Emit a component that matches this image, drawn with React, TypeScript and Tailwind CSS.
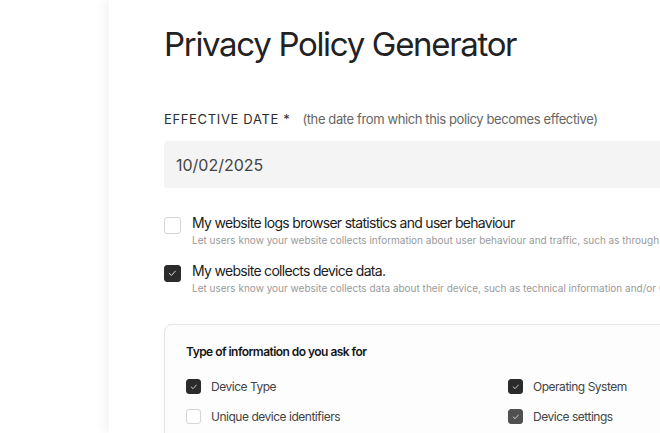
import { FC } from 'react';

const Check: FC<{ size: number }> = ({ size }) => (
  <svg width={size * 0.5} height={size * 0.5} viewBox="0 0 10 10" fill="none">
    <polyline points="1.5,5.2 4,7.6 8.6,2.6" stroke="#e8e8e8" strokeWidth="1.1" strokeLinecap="round" strokeLinejoin="round" />
  </svg>
);

interface BoxProps {
  checked: boolean;
  size: 'lg' | 'sm';
  tone?: 'dark' | 'mid';
}

const Box: FC<BoxProps> = ({ checked, size, tone = 'dark' }) => {
  const dim = size === 'lg' ? 'w-[17px] h-[17px] rounded-[3px]' : 'w-[15px] h-[15px] rounded-[3px]';
  const fill = checked
    ? tone === 'dark'
      ? 'bg-[#2b2b2b] border border-[#2b2b2b]'
      : 'bg-[#505050] border border-[#505050]'
    : 'bg-white border border-[#d4d4d4]';
  return (
    <span className={`shrink-0 flex items-center justify-center ${dim} ${fill}`}>
      {checked && <Check size={size === 'lg' ? 17 : 15} />}
    </span>
  );
};

const OptionRow: FC<{ checked: boolean; title: string; hint: string }> = ({ checked, title, hint }) => (
  <div className="flex items-start gap-[11px]">
    <div className="mt-[3px]">
      <Box checked={checked} size="lg" />
    </div>
    <div className="flex flex-col whitespace-nowrap">
      <span className="text-[14px] leading-[18px] text-[#1c1c1c] tracking-[-0.05em]">{title}</span>
      <span className="mt-[1px] text-[10px] leading-[14px] text-[#9a9a9a]">{hint}</span>
    </div>
  </div>
);

const Item: FC<{ checked: boolean; label: string; tone?: 'dark' | 'mid' }> = ({ checked, label, tone }) => (
  <div className="flex items-center gap-[10px] h-[15px]">
    <Box checked={checked} size="sm" tone={tone} />
    <span className="text-[12px] leading-[15px] text-[#444] tracking-[-0.04em] whitespace-nowrap">{label}</span>
  </div>
);

export default function App() {
  return (
    <div className="w-[660px] h-[433px] overflow-hidden bg-white flex" style={{ fontFamily: 'Inter, "Noto Sans", sans-serif' }}>
      <div className="w-[109px] shrink-0 bg-white" />
      <main className="relative shrink-0 w-[800px] bg-white shadow-[-5px_0_10px_rgba(0,0,0,0.045)] pl-[55px] pt-[24px]">
        <h1 className="text-[33px] leading-[40px] text-[#222] tracking-[-0.04em] whitespace-nowrap">Privacy Policy Generator</h1>

        <div className="mt-[47px] flex items-baseline whitespace-nowrap">
          <span className="text-[13px] leading-[16px] text-[#2e2e2e] tracking-[0.05em]">EFFECTIVE DATE *</span>
          <span className="ml-[12px] text-[13px] leading-[16px] text-[#666] tracking-[-0.03em]">
            (the date from which this policy becomes effective)
          </span>
        </div>

        <div className="mt-[14px] w-[700px] h-[47px] rounded-[4px] bg-[#f4f4f4] flex items-center pl-[12px]">
          <span className="text-[16px] text-[#444]">10/02/2025</span>
        </div>

        <div className="mt-[26px] flex flex-col gap-[15px]">
          <OptionRow
            checked={false}
            title="My website logs browser statistics and user behaviour"
            hint="Let users know your website collects information about user behaviour and traffic, such as through server logs or analytics tools."
          />
          <OptionRow
            checked={true}
            title="My website collects device data."
            hint="Let users know your website collects data about their device, such as technical information and/or GPS location."
          />
        </div>

        <div className="mt-[29px] w-[700px] h-[200px] rounded-[8px] border border-[#e4e4e4] bg-[#fdfdfd] pl-[21px] pt-[19px]">
          <div className="text-[12px] leading-[16px] font-semibold text-[#151515] tracking-[-0.045em]">
            Type of information do you ask for
          </div>
          <div className="mt-[19px] grid grid-cols-[322px_1fr] gap-y-[15px]">
            <Item checked={true} label="Device Type" />
            <Item checked={true} label="Operating System" />
            <Item checked={false} label="Unique device identifiers" />
            <Item checked={true} label="Device settings" tone="mid" />
          </div>
        </div>
      </main>
    </div>
  );
}
